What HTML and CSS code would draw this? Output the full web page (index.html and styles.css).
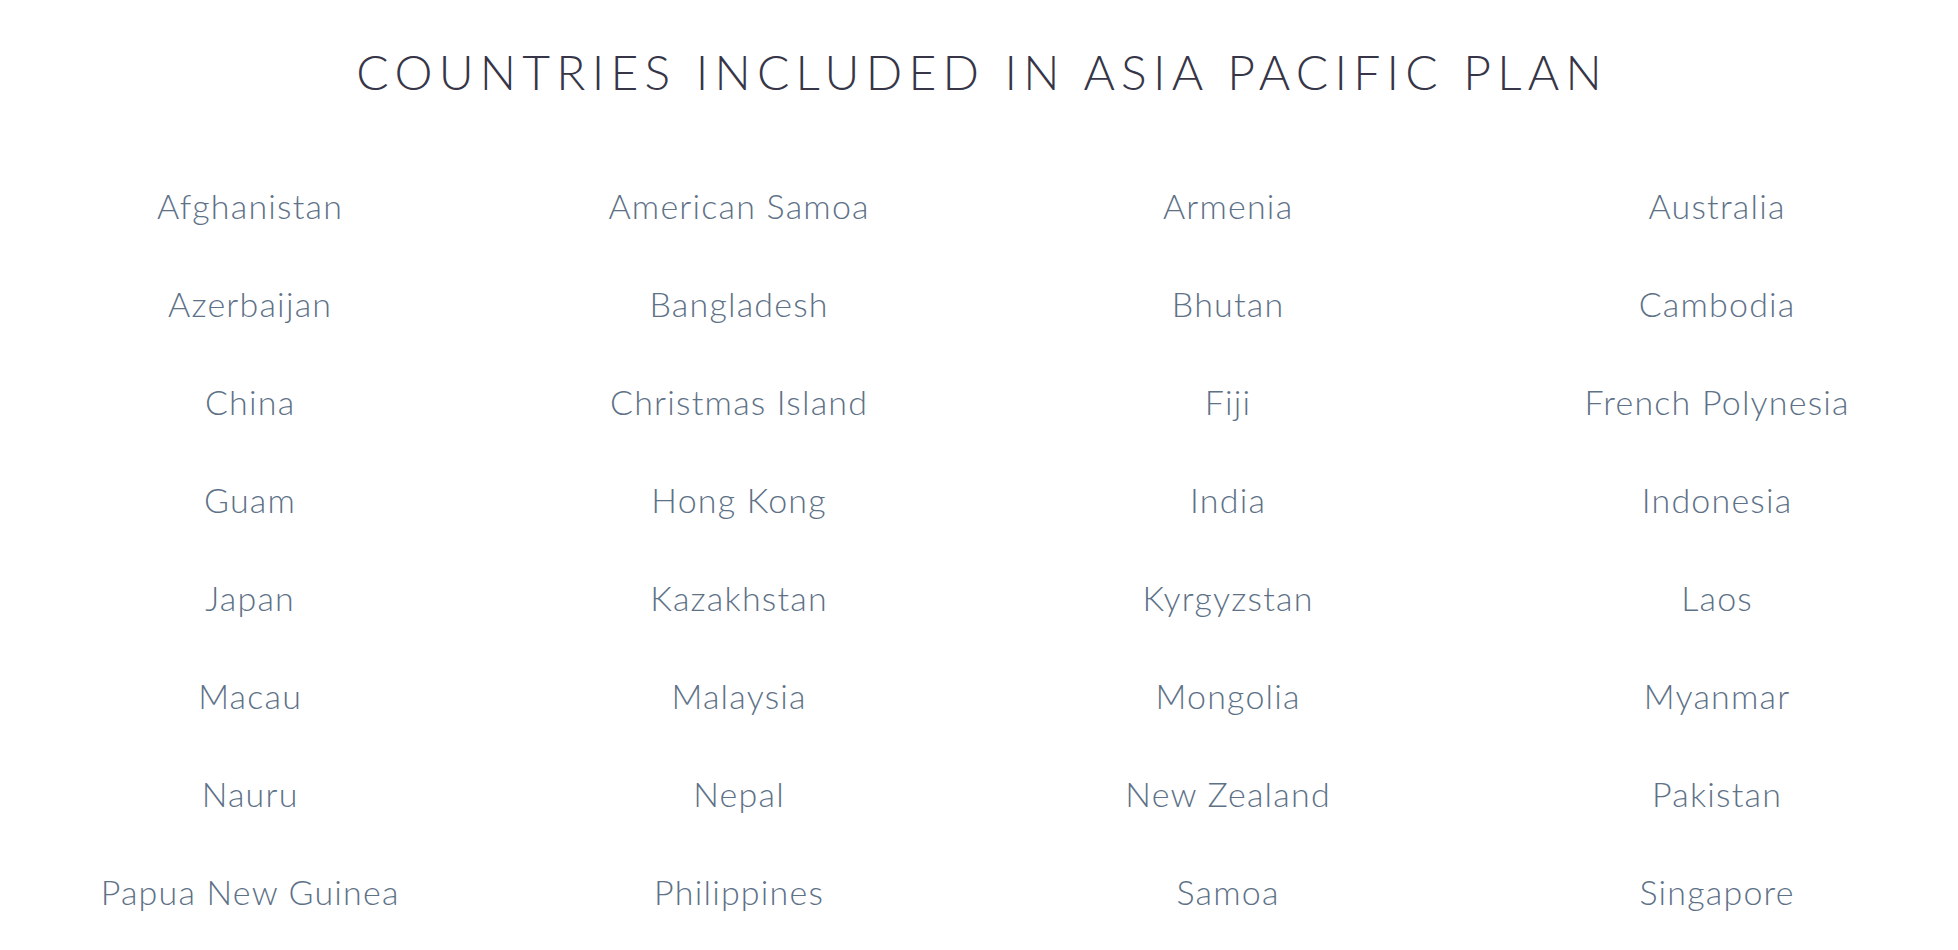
FILE: index.html
```html
<!DOCTYPE html>
<html lang="en">
<head>
    <meta charset="UTF-8">
    <meta name="viewport" content="width=device-width, initial-scale=1.0">
    <title>Asia Pacific plan countries</title>
    <link rel="stylesheet" href="styles.css">
</head>
<body>
    <section class="plan-countries">
        <h1 class="plan-title">Countries included in Asia Pacific plan</h1>

        <ul class="country-grid">
            <li>Afghanistan</li>
            <li>American Samoa</li>
            <li>Armenia</li>
            <li>Australia</li>

            <li>Azerbaijan</li>
            <li>Bangladesh</li>
            <li>Bhutan</li>
            <li>Cambodia</li>

            <li>China</li>
            <li>Christmas Island</li>
            <li>Fiji</li>
            <li>French Polynesia</li>

            <li>Guam</li>
            <li>Hong Kong</li>
            <li>India</li>
            <li>Indonesia</li>

            <li>Japan</li>
            <li>Kazakhstan</li>
            <li>Kyrgyzstan</li>
            <li>Laos</li>

            <li>Macau</li>
            <li>Malaysia</li>
            <li>Mongolia</li>
            <li>Myanmar</li>

            <li>Nauru</li>
            <li>Nepal</li>
            <li>New Zealand</li>
            <li>Pakistan</li>

            <li>Papua New Guinea</li>
            <li>Philippines</li>
            <li>Samoa</li>
            <li>Singapore</li>
        </ul>
    </section>
</body>
</html>
```

FILE: styles.css
```css
*{
    padding:0;
    margin:0;
    box-sizing: border-box;
}
body{
    background-color: #fff;
    font-family: "Lato", "Open Sans", sans-serif;
    overflow: hidden;
}
.plan-countries{
    width: 100vw;
    padding-top: 42px;
}
.plan-title{
    text-align: center;
    text-transform: uppercase;
    font-size: 48px;
    line-height: 60px;
    font-weight: 300;
    letter-spacing: 0.13em;
    /* balance the trailing letter-spacing so the title stays centred */
    padding-left: 0.13em;
    color: #363648;
}
.country-grid{
    list-style: none;
    margin-top: 55px;
    padding-left: 5px;
    display: grid;
    grid-template-columns: repeat(4, 489px);
}
.country-grid li{
    text-align: center;
    font-size: 34px;
    line-height: 98px;
    font-weight: 300;
    letter-spacing: 1.2px;
    padding-left: 1.2px;
    color: #5d7187;
}
```
